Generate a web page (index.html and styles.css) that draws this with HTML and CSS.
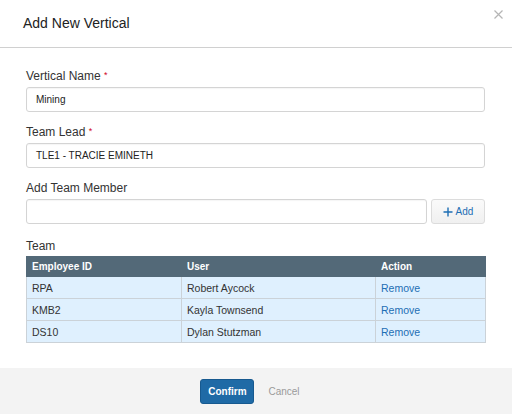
FILE: index.html
```html
<!DOCTYPE html>
<html lang="en">
<head>
<meta charset="utf-8">
<title>Add New Vertical</title>
<link rel="stylesheet" href="styles.css">
</head>
<body>
<div class="modal">
  <div class="modal-header">
    <h1 class="modal-title">Add New Vertical</h1>
    <button class="close" aria-label="Close">
      <svg width="9" height="9" viewBox="0 0 9 9"><path d="M0.5 0.5 L8.5 8.5 M8.5 0.5 L0.5 8.5" stroke="#b5b5b5" stroke-width="1.2" fill="none"/></svg>
    </button>
  </div>
  <div class="modal-body">
    <div class="group">
      <label class="label">Vertical Name <span class="req">*</span></label>
      <div class="input">Mining</div>
    </div>
    <div class="group">
      <label class="label">Team Lead <span class="req">*</span></label>
      <div class="input">TLE1 - TRACIE EMINETH</div>
    </div>
    <div class="group group-add">
      <label class="label">Add Team Member</label>
      <div class="add-row">
        <div class="input input-grow"></div>
        <button class="btn-add">
          <svg width="10" height="10" viewBox="0 0 10 10"><path d="M5 0.5 V9.5 M0.5 5 H9.5" stroke="#1d6eb4" stroke-width="1.4" fill="none"/></svg>
          <span>Add</span>
        </button>
      </div>
    </div>
    <div class="label label-team">Team</div>
    <table class="team">
      <colgroup><col class="c1"><col class="c2"><col class="c3"></colgroup>
      <thead>
        <tr><th>Employee ID</th><th>User</th><th>Action</th></tr>
      </thead>
      <tbody>
        <tr><td>RPA</td><td>Robert Aycock</td><td><a class="link">Remove</a></td></tr>
        <tr><td>KMB2</td><td>Kayla Townsend</td><td><a class="link">Remove</a></td></tr>
        <tr><td>DS10</td><td>Dylan Stutzman</td><td><a class="link">Remove</a></td></tr>
      </tbody>
    </table>
  </div>
  <div class="modal-footer">
    <button class="btn-confirm">Confirm</button>
    <button class="btn-cancel">Cancel</button>
  </div>
</div>
</body>
</html>
```
FILE: styles.css
```css
* { box-sizing: border-box; }
html, body {
  margin: 0;
  padding: 0;
  background: #fff;
  font-family: "Liberation Sans", Arial, Helvetica, sans-serif;
  color: #333;
}
.modal {
  width: 512px;
  height: 414px;
  display: flex;
  flex-direction: column;
  background: #fff;
}
.modal-header {
  position: relative;
  padding: 15px 23px;
  border-bottom: 1px solid #d0d0d0;
  height: 48px;
}
.modal-title {
  margin: 0;
  font-size: 14px;
  line-height: 17px;
  font-weight: normal;
  color: #222;
}
.close {
  position: absolute;
  top: 10px;
  left: 494px;
  width: 9px;
  height: 9px;
  padding: 0;
  border: 0;
  background: none;
  display: block;
}
.close svg { display: block; }
.modal-body {
  flex: 1;
  padding: 21px 27px 0 26px;
}
.group { margin-bottom: 13px; }
.group-add { margin-bottom: 15px; }
.label {
  display: block;
  font-size: 12px;
  line-height: 14px;
  color: #333;
  margin-bottom: 4px;
}
.req {
  color: #d0021b;
  font-size: 9px;
  vertical-align: top;
  position: relative;
  top: -1px;
}
.input {
  height: 25px;
  border: 1px solid #d4d4d4;
  border-radius: 3px;
  box-shadow: inset 0 1px 1px rgba(0,0,0,0.04);
  padding: 0 9px;
  font-size: 10px;
  line-height: 23px;
  color: #222;
  background: #fff;
}
.add-row {
  display: flex;
  gap: 4px;
}
.input-grow { flex: 1; }
.btn-add {
  width: 54px;
  height: 25px;
  border: 1px solid #dcdcdc;
  border-radius: 3px;
  background: linear-gradient(#fafafa, #f0f0f0);
  color: #1d6eb4;
  font-family: inherit;
  font-size: 10px;
  display: flex;
  align-items: center;
  justify-content: center;
  gap: 3px;
  padding: 0;
}
.btn-add svg { display: block; }
.label-team { margin-bottom: 3px; }
.team {
  width: 459px;
  border-collapse: collapse;
  table-layout: fixed;
  font-size: 10.5px;
}
.c1 { width: 155px; }
.c2 { width: 194px; }
.c3 { width: 110px; }
.team th {
  background: #536978;
  color: #fff;
  font-weight: bold;
  font-size: 10px;
  text-align: left;
  height: 20px;
  padding: 0 5px;
  border: 1px solid #536978;
}
.team td {
  background: #dff0fe;
  border: 1px solid #cbd2d8;
  height: 22px;
  padding: 0 5px;
  color: #333;
}
.link { color: #1d6eb4; text-decoration: none; }
.modal-footer {
  height: 46px;
  background: #f3f3f3;
  display: flex;
  justify-content: center;
  align-items: flex-start;
  padding-top: 11px;
}
.btn-confirm {
  width: 54px;
  height: 25px;
  background: #1f6aa6;
  border: 1px solid #17598f;
  border-radius: 3px;
  color: #fff;
  font-family: inherit;
  font-weight: bold;
  font-size: 10px;
  padding: 0;
}
.btn-cancel {
  height: 25px;
  background: none;
  border: 0;
  color: #9a9a9a;
  font-family: inherit;
  font-size: 10px;
  padding: 0 12px 0 14px;
}
```
